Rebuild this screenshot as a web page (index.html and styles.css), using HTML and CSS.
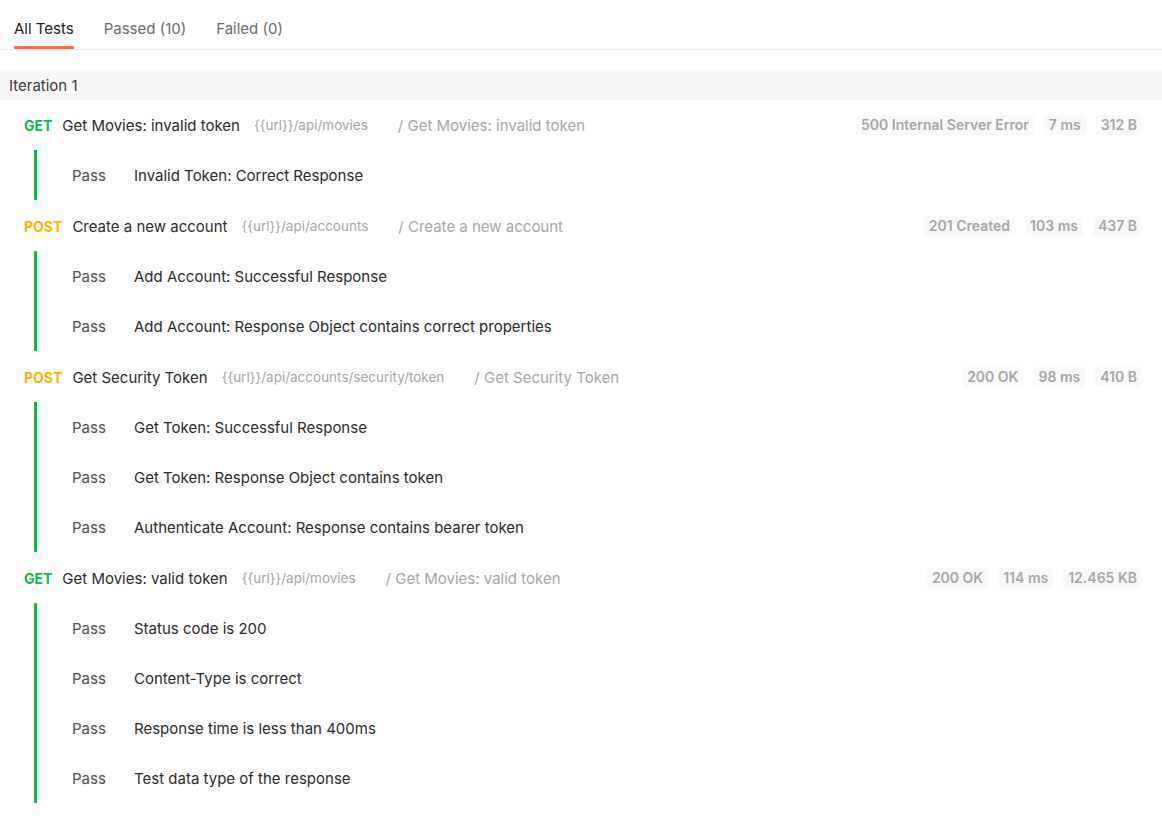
FILE: index.html
```html
<!DOCTYPE html>
<html>
<head>
<meta charset="utf-8">
<link rel="stylesheet" href="styles.css">
</head>
<body>
<div class="tabs">
  <div class="tab active">All Tests</div>
  <div class="tab">Passed (10)</div>
  <div class="tab">Failed (0)</div>
</div>
<div class="iteration">Iteration 1</div>

<div class="req">
  <span class="method get">GET</span>
  <span class="name">Get Movies: invalid token</span>
  <span class="url">{{url}}/api/movies</span>
  <span class="path">/ Get Movies: invalid token</span>
  <div class="badges"><span class="badge">500 Internal Server Error</span><span class="badge">7 ms</span><span class="badge">312 B</span></div>
</div>
<div class="tests">
  <div class="test"><span class="status">Pass</span><span class="tname">Invalid Token: Correct Response</span></div>
</div>

<div class="req">
  <span class="method post">POST</span>
  <span class="name">Create a new account</span>
  <span class="url">{{url}}/api/accounts</span>
  <span class="path">/ Create a new account</span>
  <div class="badges"><span class="badge">201 Created</span><span class="badge">103 ms</span><span class="badge">437 B</span></div>
</div>
<div class="tests">
  <div class="test"><span class="status">Pass</span><span class="tname">Add Account: Successful Response</span></div>
  <div class="test"><span class="status">Pass</span><span class="tname">Add Account: Response Object contains correct properties</span></div>
</div>

<div class="req">
  <span class="method post">POST</span>
  <span class="name">Get Security Token</span>
  <span class="url">{{url}}/api/accounts/security/token</span>
  <span class="path">/ Get Security Token</span>
  <div class="badges"><span class="badge">200 OK</span><span class="badge">98 ms</span><span class="badge">410 B</span></div>
</div>
<div class="tests">
  <div class="test"><span class="status">Pass</span><span class="tname">Get Token: Successful Response</span></div>
  <div class="test"><span class="status">Pass</span><span class="tname">Get Token: Response Object contains token</span></div>
  <div class="test"><span class="status">Pass</span><span class="tname">Authenticate Account: Response contains bearer token</span></div>
</div>

<div class="req">
  <span class="method get">GET</span>
  <span class="name">Get Movies: valid token</span>
  <span class="url">{{url}}/api/movies</span>
  <span class="path">/ Get Movies: valid token</span>
  <div class="badges"><span class="badge">200 OK</span><span class="badge">114 ms</span><span class="badge">12.465 KB</span></div>
</div>
<div class="tests">
  <div class="test"><span class="status">Pass</span><span class="tname">Status code is 200</span></div>
  <div class="test"><span class="status">Pass</span><span class="tname">Content-Type is correct</span></div>
  <div class="test"><span class="status">Pass</span><span class="tname">Response time is less than 400ms</span></div>
  <div class="test"><span class="status">Pass</span><span class="tname">Test data type of the response</span></div>
</div>
</body>
</html>
```
FILE: styles.css
```css
* { box-sizing: border-box; }
html, body { margin: 0; padding: 0; background: #ffffff; }
body {
  font-family: Inter, "Open Sans", sans-serif;
  font-size: 15px;
  color: #2b2b2b;
}
.tabs {
  display: flex;
  gap: 30px;
  padding-left: 14px;
  border-bottom: 1px solid #ededed;
}
.tab {
  padding-top: 19px;
  padding-bottom: 7px;
  line-height: 20px;
  color: #6b6b6b;
  border-bottom: 3px solid transparent;
}
.tab.active {
  color: #212121;
  border-bottom-color: #ff6c37;
}
.iteration {
  margin-top: 20px;
  height: 30px;
  line-height: 30px;
  padding-top: 1px;
  padding-left: 9px;
  background: #f7f7f7;
  color: #3a3a3a;
}
.req {
  display: flex;
  align-items: center;
  height: 50px;
  padding-left: 24px;
  padding-right: 20px;
}
.method {
  font-weight: 700;
  font-size: 14px;
  margin-right: 10px;
}
.method.get { color: #0cbb52; }
.method.post { color: #ffb400; }
.name { color: #2b2b2b; }
.url {
  margin-left: 14px;
  font-size: 13.5px;
  color: #a6a6a6;
}
.path {
  margin-left: 30px;
  color: #a6a6a6;
}
.badges {
  margin-left: auto;
  display: flex;
  gap: 10px;
}
.badge {
  height: 20px;
  line-height: 20px;
  padding: 0 5px;
  border-radius: 4px;
  background: #f9f9f9;
  color: #a6a6a6;
  font-size: 14px;
  font-weight: 600;
}
.tests {
  margin-left: 34px;
  margin-bottom: 1px;
  border-left: 3px solid #0cbb52;
}
.test {
  display: flex;
  align-items: center;
  height: 50px;
  padding-left: 35px;
}
.status {
  width: 62px;
  color: #505050;
}
.tname { color: #2b2b2b; }
```
